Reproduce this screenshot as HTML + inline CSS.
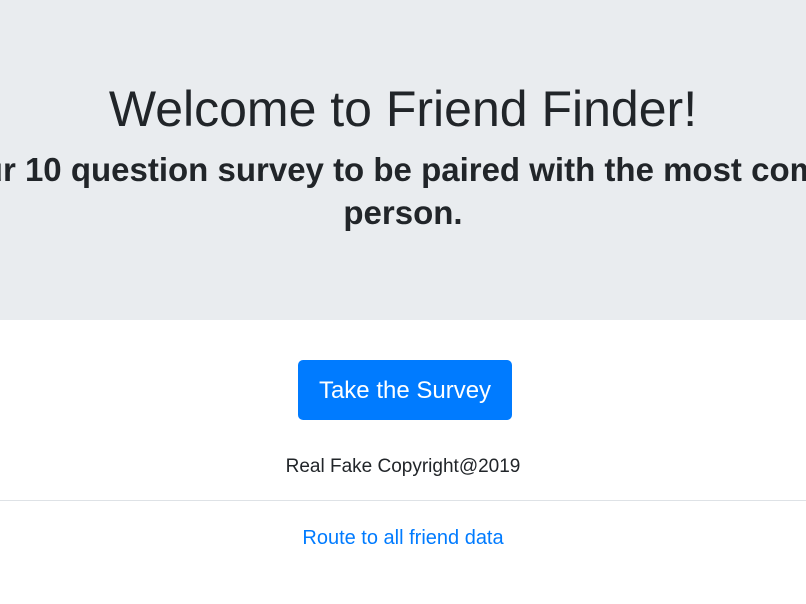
<!DOCTYPE html>
<html><head><style>
html,body{margin:0;padding:0;width:806px;height:604px;overflow:hidden;background:#fff;font-family:"Liberation Sans",sans-serif;color:#212529}
.jumbo{position:absolute;left:0;top:0;width:806px;height:320px;background:#e9ecef;overflow:hidden}
h1{position:absolute;left:0;width:806px;top:77px;margin:0;text-align:center;font-size:50px;font-weight:500;line-height:64px}
.sub{position:absolute;left:-400px;width:1606px;top:148px;text-align:center;font-size:33px;font-weight:bold;line-height:43px;white-space:nowrap;color:#212529}
.btn{position:absolute;left:298px;top:360px;width:214px;height:60px;background:#007bff;border-radius:5px;color:#fff;font-size:24px;line-height:62px;text-align:center}
.copy{position:absolute;left:0;width:806px;top:456px;text-align:center;font-size:19px;line-height:22px}
hr{position:absolute;left:0;top:500px;width:806px;margin:0;border:0;border-top:1px solid #dee2e6}
.link{position:absolute;left:0;width:806px;top:527px;text-align:center;font-size:20px;line-height:22px;color:#007bff}
</style></head><body>
<div class="jumbo">
<h1>Welcome to Friend Finder!</h1>
<div class="sub">Take our 10 question survey to be paired with the most compatible<br>person.</div>
</div>
<div class="btn">Take the Survey</div>
<div class="copy">Real Fake Copyright@2019</div>
<hr>
<div class="link">Route to all friend data</div>
</body></html>
